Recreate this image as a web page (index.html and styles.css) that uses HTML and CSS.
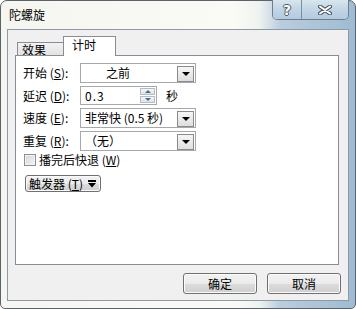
FILE: index.html
```html
<!DOCTYPE html>
<html lang="zh-CN">
<head>
    <meta charset="UTF-8">
    <title>陀螺旋</title>
    <link rel="stylesheet" href="styles.css">
</head>
<body>
    <div class="window">
        <div class="titlebar">
            <span class="title">陀螺旋</span>
            <div class="caption-btns">
                <div class="cap help">?</div>
                <div class="cap close">
                    <svg width="14" height="10" viewBox="0 0 14 10">
                        <path d="M2 1.5 L12 8.5 M12 1.5 L2 8.5" stroke="#4a5866" stroke-width="4" stroke-linecap="round"/>
                        <path d="M2 1.5 L12 8.5 M12 1.5 L2 8.5" stroke="#fff" stroke-width="2" stroke-linecap="round"/>
                    </svg>
                </div>
            </div>
        </div>
        <div class="client">
            <div class="tabs">
                <div class="tab">效果</div>
                <div class="tab active">计时</div>
            </div>
            <div class="panel">
                <div class="row r1">
                    <label class="lbl">开始 (<u>S</u>):</label>
                    <div class="select start"><span class="val">之前</span><span class="drop"></span></div>
                </div>
                <div class="row r2">
                    <label class="lbl">延迟 (<u>D</u>):</label>
                    <div class="spin">
                        <span class="val num">0.3</span>
                        <span class="spin-btns"><span class="up"></span><span class="down"></span></span>
                    </div>
                    <span class="unit">秒</span>
                </div>
                <div class="row r3">
                    <label class="lbl">速度 (<u>E</u>):</label>
                    <div class="select"><span class="val">非常快 (0.5 秒)</span><span class="drop"></span></div>
                </div>
                <div class="row r4">
                    <label class="lbl">重复 (<u>R</u>):</label>
                    <div class="select"><span class="val">（无）</span><span class="drop"></span></div>
                </div>
                <div class="check-row">
                    <span class="checkbox"></span>
                    <span>播完后快退 (<u>W</u>)</span>
                </div>
                <button class="btn trigger"><span class="btn-text">触发器 (<u>T</u>)</span>
                    <svg width="8" height="8" viewBox="0 0 8 8"><rect x="0" y="0" width="8" height="2" fill="#000"/><path d="M0 3 L8 3 L4 7.5 Z" fill="#000"/></svg>
                </button>
            </div>
            <div class="footer">
                <button class="btn">确定</button>
                <button class="btn">取消</button>
            </div>
        </div>
    </div>
</body>
</html>
```

FILE: styles.css
```css
body {
    margin: 0;
    padding: 0;
    background-color: #fff;
    font-family: "Noto Sans CJK SC", "Liberation Sans", sans-serif;
    font-size: 12px;
    color: #000;
}
u {
    text-decoration: underline;
    text-underline-offset: 1px;
}
.window {
    width: 356px;
    height: 309px;
    box-sizing: border-box;
    border: 1px solid #5a636c;
    border-radius: 7px 7px 5px 5px;
    background: linear-gradient(to right, #f6f6f1 0%, #fbfbf5 66%, #eef2f0 73%, #b9cddd 79%, #9fbbd2 100%);
    padding: 0 6px 7px 6px;
    display: flex;
    flex-direction: column;
}
.titlebar {
    height: 28px;
    display: flex;
    justify-content: space-between;
    align-items: flex-start;
}
.title {
    padding: 7px 0 0 2px;
    line-height: 14px;
    color: #000;
}
.caption-btns {
    display: flex;
    margin-top: -1px;
    border: 1px solid #6b7e92;
    border-top: none;
    border-radius: 0 0 5px 5px;
    overflow: hidden;
    box-shadow: inset 0 0 0 1px rgba(255,255,255,0.5);
}
.cap {
    height: 19px;
    display: flex;
    align-items: center;
    justify-content: center;
    background: linear-gradient(#d9e6ef, #c1d5e5 50%, #b3cbdf 100%);
}
.help {
    width: 28px;
    border-right: 1px solid #7d90a3;
    color: #fff;
    font-family: "DejaVu Sans", sans-serif;
    font-weight: bold;
    font-size: 14px;
    text-shadow: 1px 0 0 #4a5866, -1px 0 0 #4a5866, 0 1px 0 #4a5866, 0 -1px 0 #4a5866;
}
.close {
    width: 46px;
}
.client {
    flex: 1;
    border: 1px solid #8d9aa6;
    background-color: #f0f0f0;
    display: flex;
    flex-direction: column;
}
.tabs {
    display: flex;
    align-items: flex-end;
    height: 19px;
    padding: 6px 0 0 9px;
}
.tab {
    width: 46px;
    border: 1px solid #898c95;
    border-bottom: none;
    border-right: none;
    background: linear-gradient(#f2f2f2, #e3e3e3);
    line-height: 13px;
    padding-left: 4px;
    box-sizing: border-box;
    height: 13px;
}
.tab.active {
    width: 53px;
    height: 20px;
    margin-bottom: -1px;
    border-right: 1px solid #898c95;
    background: #fff;
    padding-left: 8px;
    line-height: 15px;
    position: relative;
    z-index: 1;
}
.panel {
    height: 210px;
    box-sizing: border-box;
    margin: 0 9px 0 7px;
    border: 1px solid #898c95;
    background-color: #fff;
    padding: 7px 0 0 7px;
}
.row {
    display: flex;
    align-items: center;
    height: 20px;
    margin-bottom: 3px;
}
.row.r2 {
    height: 19px;
}
.lbl {
    width: 57px;
    line-height: 14px;
    white-space: nowrap;
}
.select {
    width: 116px;
    height: 20px;
    box-sizing: border-box;
    border: 1px solid #a5a9ae;
    display: flex;
    align-items: center;
    justify-content: space-between;
    padding: 0 1px 0 4px;
}
.select.start {
    padding-left: 25px;
}
.val {
    line-height: 14px;
    white-space: nowrap;
}
.num {
    letter-spacing: 1px;
}
.drop {
    width: 17px;
    height: 16px;
    box-sizing: border-box;
    border: 1px solid #8a8a8a;
    background: linear-gradient(#f6f6f6, #dedede);
    display: flex;
    align-items: center;
    justify-content: center;
    margin-top: 1px;
}
.drop::after {
    content: "";
    border-left: 4px solid transparent;
    border-right: 4px solid transparent;
    border-top: 4px solid #000;
    margin-top: 1px;
}
.spin {
    width: 77px;
    height: 19px;
    box-sizing: border-box;
    border: 1px solid #a5a9ae;
    display: flex;
    align-items: center;
    justify-content: space-between;
    padding: 0 1px 0 4px;
}
.spin-btns {
    width: 15px;
    height: 15px;
    display: flex;
    flex-direction: column;
    gap: 1px;
}
.spin-btns span {
    flex: 1;
    border: 1px solid #b6bcc6;
    background: linear-gradient(#f4f6f9, #dde3ea);
    display: flex;
    align-items: center;
    justify-content: center;
}
.spin-btns .up::after {
    content: "";
    border-left: 3px solid transparent;
    border-right: 3px solid transparent;
    border-bottom: 3px solid #4d6a8e;
}
.spin-btns .down::after {
    content: "";
    border-left: 3px solid transparent;
    border-right: 3px solid transparent;
    border-top: 3px solid #4d6a8e;
}
.unit {
    margin-left: 9px;
}
.check-row {
    display: flex;
    align-items: center;
    gap: 3px;
    height: 12px;
    margin-top: 2px;
    padding-left: 1px;
    line-height: 14px;
}
.checkbox {
    width: 12px;
    height: 12px;
    box-sizing: border-box;
    border: 1px solid #8f8f8f;
    background: linear-gradient(135deg, #d6d6d6, #f4f4f4);
    box-shadow: inset 0 0 0 1px #f3f3f3;
}
.btn {
    font-family: "Noto Sans CJK SC", "Liberation Sans", sans-serif;
    font-size: 12px;
    color: #000;
    border: 1px solid #707070;
    border-radius: 3px;
    background: linear-gradient(#f2f2f2 0%, #ebebeb 50%, #dddddd 51%, #cfcfcf 100%);
    box-shadow: inset 0 0 0 1px #fbfbfb;
    padding: 0;
    line-height: 14px;
}
.trigger {
    margin: 9px 0 0 2px;
    width: 76px;
    height: 17px;
    display: flex;
    align-items: center;
    gap: 5px;
    padding-left: 3px;
    white-space: nowrap;
}
.footer {
    display: flex;
    justify-content: flex-end;
    gap: 10px;
    padding: 8px 7px 0 0;
}
.footer .btn {
    width: 74px;
    height: 21px;
}
```
